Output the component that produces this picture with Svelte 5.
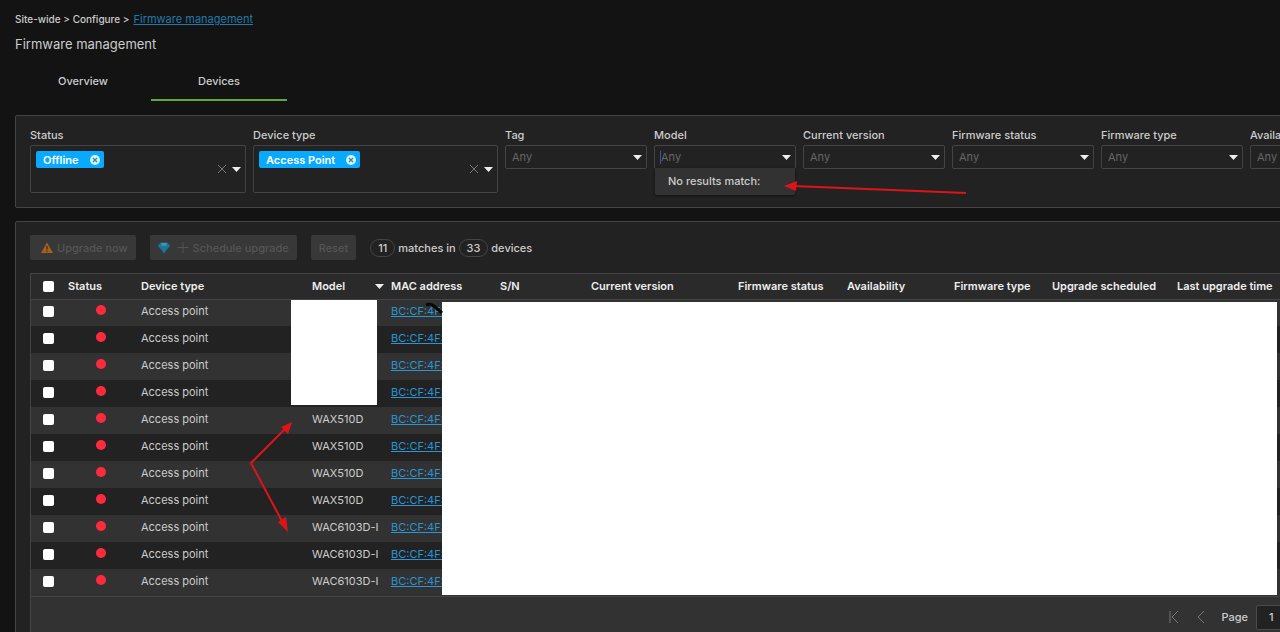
<script lang="ts">
	type Filter = { id: string; label: string; chip?: string; search?: boolean };

	const filters: Filter[] = [
		{ id: 'status', label: 'Status', chip: 'Offline' },
		{ id: 'type', label: 'Device type', chip: 'Access Point' },
		{ id: 'tag', label: 'Tag' },
		{ id: 'model', label: 'Model', search: true },
		{ id: 'version', label: 'Current version' },
		{ id: 'fw-status', label: 'Firmware status' },
		{ id: 'fw-type', label: 'Firmware type' },
		{ id: 'availability', label: 'Availability' },
	];

	const columns = [
		{ id: 'status', label: 'Status' },
		{ id: 'type', label: 'Device type' },
		{ id: 'model', label: 'Model' },
		{ id: 'mac', label: 'MAC address' },
		{ id: 'sn', label: 'S/N' },
		{ id: 'version', label: 'Current version' },
		{ id: 'fw-status', label: 'Firmware status' },
		{ id: 'availability', label: 'Availability' },
		{ id: 'fw-type', label: 'Firmware type' },
		{ id: 'scheduled', label: 'Upgrade scheduled' },
		{ id: 'last', label: 'Last upgrade time' },
	];

	// the first four models are blanked out
	const models = [
		...Array(4).fill(''),
		...Array(4).fill('WAX510D'),
		...Array(3).fill('WAC6103D-I'),
	];

	let checked = $state(models.map(() => false));
	let all = $derived(checked.every(Boolean));

	const toggleAll = () => (checked = checked.map(() => !all));
</script>

{#snippet caret()}
	<svg class="caret" viewBox="0 0 9 5" aria-hidden="true"><path d="M0 0h9L4.500 5z" /></svg>
{/snippet}

<main>
	<nav class="crumbs" aria-label="Breadcrumb">
		<span>Site-wide &gt; Configure &gt;</span>
		<a href="#firmware">Firmware management</a>
	</nav>
	<h1>Firmware management</h1>

	<nav class="tabs" aria-label="Sections">
		<a href="#overview">Overview</a>
		<a href="#devices" class="active">Devices</a>
	</nav>

	<section class="panel filters">
		{#each filters as f}
			<div class="field {f.id}">
				<label for={f.id}>{f.label}</label>
				{#if f.chip}
					<div class="box multi">
						<span class="chip">
							{f.chip}
							<button aria-label="Remove {f.chip}">
								<svg viewBox="0 0 10 10">
									<circle cx="5" cy="5" r="5" fill="#dff3ff" />
									<path d="M3 3l4 4M7 3l-4 4" stroke="#168bc7" stroke-width="1.200" />
								</svg>
							</button>
						</span>
						<input id={f.id} />
						<button class="clear" aria-label="Clear {f.label}">
							<svg viewBox="0 0 8 8"><path d="M0 0l8 8M8 0l-8 8" /></svg>
						</button>
						{@render caret()}
					</div>
				{:else if f.search}
					<div class="box">
						<span class="cursor"></span>
						<input id={f.id} placeholder="Any" />
						{@render caret()}
						<div class="menu">No results match:</div>
					</div>
				{:else}
					<div class="box">
						<select id={f.id}><option>Any</option></select>
						{@render caret()}
					</div>
				{/if}
			</div>
		{/each}
	</section>

	<section class="panel devices">
		<div class="toolbar">
			<button class="action" disabled>
				<svg class="warning" viewBox="0 0 12 11">
					<path d="M6 0.500L12 11H0z" fill="#a5611c" />
					<path d="M6 4v3.500M6 8.500v1.200" stroke="#3a2a1a" stroke-width="1.200" />
				</svg>
				Upgrade now
			</button>
			<button class="action" disabled>
				<svg class="gem" viewBox="0 0 12 11">
					<path d="M2.500 0.500h7L12 4 6 11 0 4z" fill="#1c7295" />
					<path d="M3 1h6L8 4H4z" fill="#4594ad" />
					<path d="M0 4h12M4 4l2 7 2-7" fill="none" stroke="#2586a8" stroke-width="0.500" />
				</svg>
				<svg class="plus" viewBox="0 0 12 12"><path d="M6 0v12M0 6h12" /></svg>
				Schedule upgrade
			</button>
			<button class="action reset" disabled>Reset</button>
			<p><b>11</b> matches in <b>33</b> devices</p>
		</div>

		<div class="grid">
			<table>
				<colgroup>
					<col class="w-check" />
					{#each columns as c}
						<col class="w-{c.id}" />
					{/each}
				</colgroup>
				<thead>
					<tr>
						<th class="check">
							<input type="checkbox" aria-label="Select all" checked={all} onchange={toggleAll} />
						</th>
						{#each columns as c}
							<th>
								{#if c.id === 'model'}
									<span class="sorted">{c.label}{@render caret()}</span>
								{:else}
									{c.label}
								{/if}
							</th>
						{/each}
					</tr>
				</thead>
				<tbody>
					{#each models as model, i}
						<tr>
							<td class="check">
								<input type="checkbox" aria-label="Select device {i + 1}" bind:checked={checked[i]} />
							</td>
							<td><span class="dot"></span></td>
							<td>Access point</td>
							<td>{model}</td>
							<td><a href="#device">BC:CF:4F:</a></td>
							<td colspan="7"></td>
						</tr>
					{/each}
				</tbody>
			</table>
			<div class="mask mask-models"></div>
			<div class="mask mask-details"></div>
			<footer>
				<button aria-label="First page" disabled>
					<svg viewBox="0 0 10 12"><path d="M1 0v12M9 0L3 6l6 6" /></svg>
				</button>
				<button aria-label="Previous page" disabled>
					<svg viewBox="0 0 10 12"><path d="M9 0L3 6l6 6" /></svg>
				</button>
				<label for="page">Page</label>
				<input id="page" value="1" />
			</footer>
		</div>
	</section>

	<svg class="marks" viewBox="0 0 1280 632" aria-hidden="true">
		<path class="scribble" d="M426 305q4-2 8 1l8 7" />
		<path d="M966 193L793 186M285 429L251 463L283 523" />
		<path class="head" d="M784 186l13-5-1 10zM292 422l-4 12-7-7zM288 532l-10-10 8-5z" />
	</svg>
</main>

<style>
	:global(body) {
		background: #131313;
		overflow: hidden;
	}
	main {
		position: relative;
		box-sizing: border-box;
		height: 100vh;
		padding: 11px 0 0 15px;
		overflow: hidden;
		color: #ccc;
		font: 11px/16px Inter, 'Liberation Sans', sans-serif;
	}
	button,
	input,
	select {
		box-sizing: border-box;
		margin: 0;
		padding: 0;
		border: 0;
		background: none;
		color: inherit;
		font: inherit;
	}
	svg {
		display: block;
		flex: none;
	}
	a {
		color: #2b94d1;
	}

	.crumbs {
		display: flex;
		gap: 4px;
	}
	.crumbs span {
		font-size: 10px;
		font-weight: 500;
	}
	.crumbs a {
		color: #217aab;
	}
	h1 {
		margin: 7px 0 0;
		font-size: 13px;
		font-weight: 400;
		line-height: 20px;
	}
	.tabs {
		display: flex;
		margin: 7px 0 14px;
	}
	.tabs a {
		box-sizing: border-box;
		width: 136px;
		height: 40px;
		padding-top: 12px;
		border-bottom: 2px solid transparent;
		color: #ccc;
		font-weight: 500;
		text-align: center;
		text-decoration: none;
	}
	.tabs .active {
		border-color: #62a63c;
	}

	.panel {
		box-sizing: border-box;
		border: 1px solid #444;
		border-radius: 2px;
		background: #222;
	}
	.filters {
		display: flex;
		align-items: flex-start;
		gap: 7px;
		width: max-content;
		min-width: 100%;
		margin-bottom: 13px;
		padding: 11px 14px 14px;
	}
	.field {
		width: 142px;
	}
	.field.status {
		width: 216px;
	}
	.field.type {
		width: 245px;
	}
	.field label {
		display: block;
		margin-bottom: 2px;
		font-weight: 500;
	}
	.box {
		position: relative;
		box-sizing: border-box;
		display: flex;
		align-items: center;
		height: 24px;
		padding: 0 4px 0 6px;
		border: 1px solid #444;
		border-radius: 2px;
		color: #666;
	}
	.box input,
	.box select {
		flex: 1;
		min-width: 0;
		outline: 0;
		appearance: none;
	}
	.box input::placeholder {
		color: #666;
		opacity: 1;
	}
	.caret {
		width: 9px;
		height: 5px;
		fill: #eee;
	}
	.cursor {
		position: absolute;
		left: 5px;
		width: 1px;
		height: 13px;
		background: #4050a0;
	}
	.multi {
		height: 48px;
		padding-left: 5px;
	}
	.chip {
		display: flex;
		align-items: center;
		align-self: flex-start;
		gap: 11px;
		height: 17px;
		margin-top: 5px;
		padding: 0 4px 0 7px;
		border-radius: 2px;
		background: #07aaff;
		color: #fff;
		font-weight: 600;
	}
	.chip svg {
		width: 10px;
		height: 10px;
	}
	.clear {
		margin-right: 6px;
	}
	.clear svg {
		width: 8px;
		height: 8px;
		stroke: #777;
	}
	.menu {
		position: absolute;
		top: 22px;
		left: 0;
		right: 0;
		padding: 5px 13px 6px;
		border-radius: 0 0 2px 2px;
		background: #323232;
		box-shadow: 0 1px 3px #0008;
		color: #ccc;
		font-weight: 500;
	}

	.devices {
		min-width: 1290px;
		padding: 13px 14px;
	}
	.toolbar {
		display: flex;
		align-items: center;
		gap: 14px;
		margin-bottom: 13px;
	}
	.action {
		display: flex;
		align-items: center;
		gap: 4px;
		height: 25px;
		padding: 0 8px 0 11px;
		border-radius: 2px;
		background: #383838;
		color: #555;
		font-weight: 500;
	}
	.action.reset {
		padding: 0 8px;
	}
	.warning,
	.gem,
	.plus {
		width: 12px;
		height: 11px;
	}
	.gem {
		margin: 0 3px 0 -3px;
	}
	.plus {
		stroke: #555;
	}
	.toolbar p {
		margin: 0;
		font-weight: 500;
	}
	.toolbar b {
		display: inline-block;
		padding: 0 7px;
		border: 1px solid #444;
		border-radius: 9px;
		font-weight: 500;
	}

	.grid {
		position: relative;
		border: solid #444;
		border-width: 1px 0 0 1px;
	}
	table {
		width: 100%;
		table-layout: fixed;
		border-collapse: collapse;
		white-space: nowrap;
	}
	.w-check {
		width: 37px;
	}
	.w-status {
		width: 73px;
	}
	.w-type {
		width: 171px;
	}
	.w-model {
		width: 79px;
	}
	.w-mac {
		width: 109px;
	}
	.w-sn {
		width: 91px;
	}
	.w-version {
		width: 147px;
	}
	.w-fw-status {
		width: 109px;
	}
	.w-availability {
		width: 107px;
	}
	.w-fw-type {
		width: 98px;
	}
	.w-scheduled {
		width: 125px;
	}
	th,
	td {
		box-sizing: border-box;
		padding: 0;
		text-align: left;
	}
	th {
		height: 25px;
		border-bottom: 1px solid #444;
		background: #2a2a2a;
		color: #eee;
		font-weight: 600;
	}
	td {
		height: 27px;
		padding-bottom: 4px;
	}
	tbody tr:nth-child(odd) {
		background: #323232;
	}
	.check input {
		display: block;
		width: 11px;
		height: 11px;
		margin-left: 12px;
		border-radius: 2px;
		background: #fff;
		appearance: none;
	}
	td.check {
		padding-bottom: 2px;
	}
	.check input:checked {
		background: #07aaff;
	}
	.sorted {
		display: flex;
		align-items: center;
		justify-content: space-between;
		margin-right: 7px;
	}
	.dot {
		display: block;
		width: 10px;
		height: 10px;
		margin: 0 0 2px 28px;
		border-radius: 50%;
		background: #ff2a3e;
	}
	.mask {
		position: absolute;
		background: #fff;
	}
	.mask-models {
		top: 26px;
		left: 260px;
		width: 86px;
		height: 105px;
	}
	.mask-details {
		top: 28px;
		left: 411px;
		right: 13px;
		height: 293px;
	}
	footer {
		display: flex;
		align-items: center;
		justify-content: flex-end;
		gap: 16px;
		height: 40px;
		border-top: 1px solid #444;
		background: #323232;
		font-weight: 500;
	}
	footer svg {
		width: 10px;
		height: 12px;
		fill: none;
		stroke: #777;
	}
	footer input {
		width: 34px;
		height: 25px;
		margin-left: -8px;
		padding-left: 12px;
		border: 1px solid #4a4a4a;
		border-radius: 2px;
		background: #222;
	}

	.marks {
		position: absolute;
		top: 0;
		left: 0;
		width: 1280px;
		height: 632px;
		fill: none;
		stroke: #df1418;
		stroke-width: 2;
		pointer-events: none;
	}
	.head {
		fill: #df1418;
		stroke: none;
	}
	.scribble {
		stroke: #080808;
		stroke-width: 3;
	}
</style>
